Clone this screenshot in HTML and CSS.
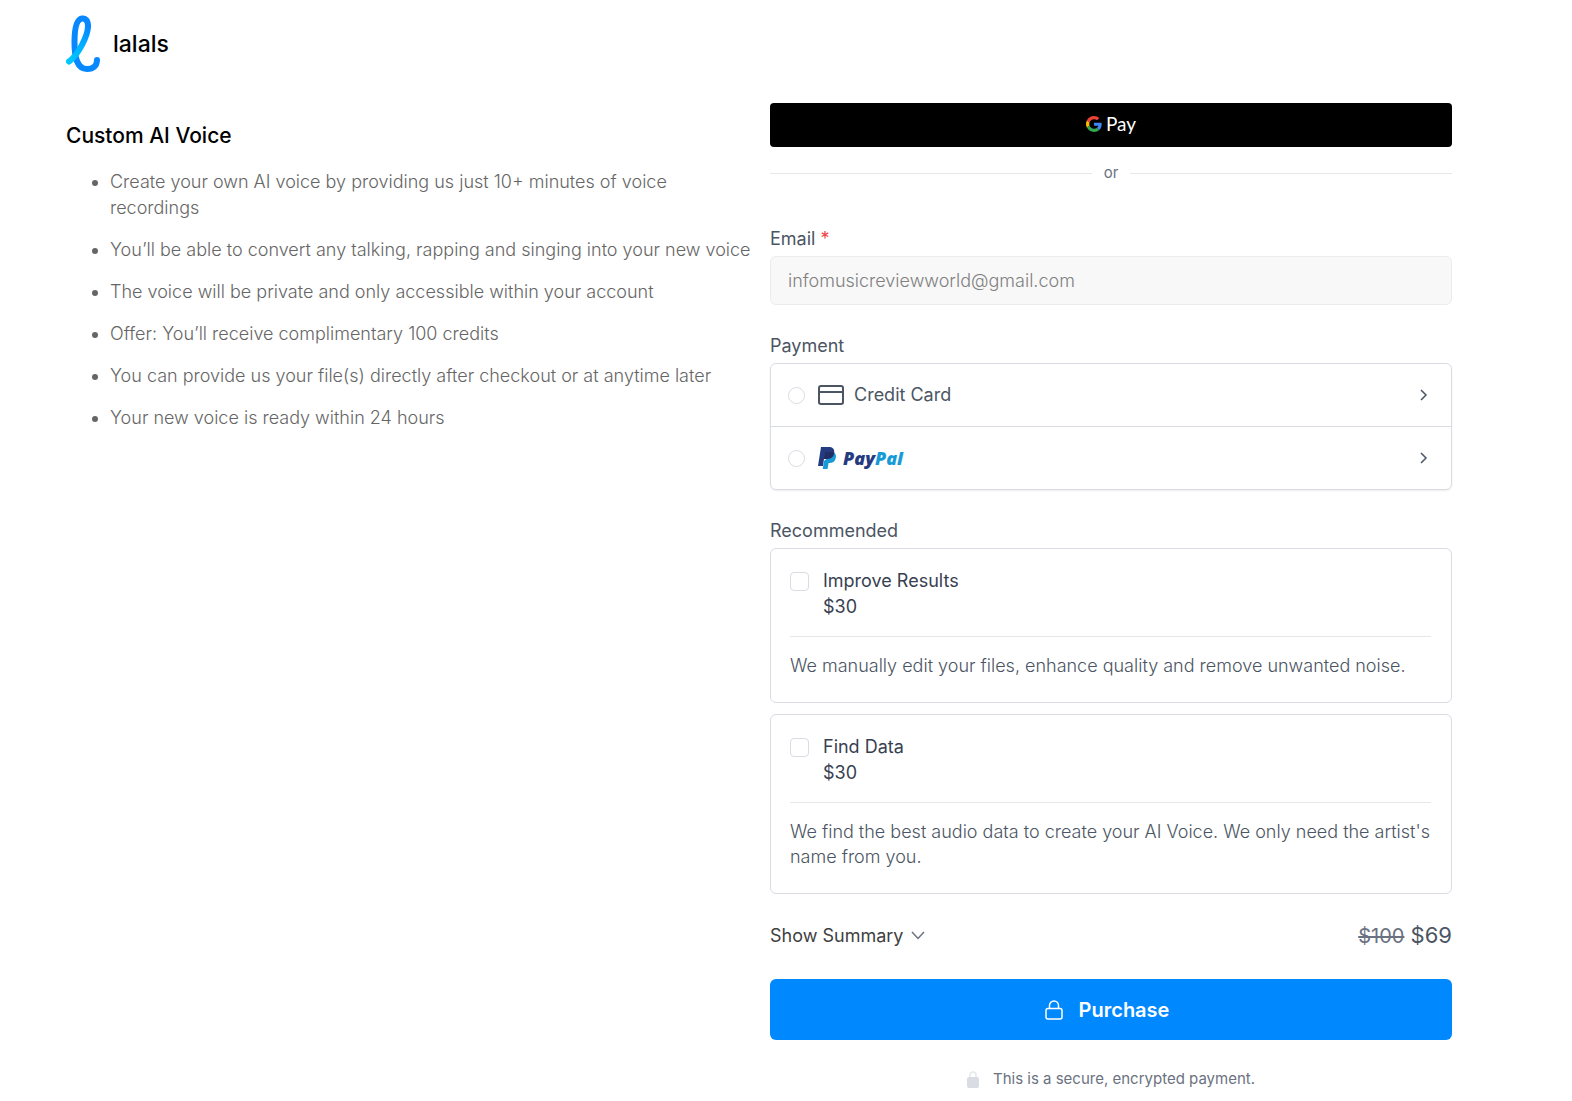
FILE: index.html
```html
<!DOCTYPE html>
<html lang="en">
<head>
<meta charset="utf-8">
<meta name="viewport" content="width=device-width, initial-scale=1">
<title>lalals – Custom AI Voice</title>
<link rel="stylesheet" href="styles.css">
</head>
<body>
<header class="site-header">
  <a class="brand" href="#">
    <svg class="brand-mark" viewBox="0 0 34 58" width="34" height="58" fill="none" stroke-linecap="round" stroke-linejoin="round" stroke-width="6" aria-hidden="true">
      <defs>
        <linearGradient id="stroke-fade" gradientUnits="userSpaceOnUse" x1="3" y1="47" x2="22" y2="12">
          <stop offset="0" stop-color="#00c8ff"/><stop offset=".45" stop-color="#00b4ff"/><stop offset="1" stop-color="#0888ff"/>
        </linearGradient>
      </defs>
      <path stroke="#0888ff" d="M22 11C22 5 19 3 16 3.500C10 4.500 8.500 15 8.500 27C8.500 43 11 54 21 54C28 54 31 50 31 45"/>
      <path stroke="url(#stroke-fade)" d="M3 46.500C12 40 22 21 22 11"/>
    </svg>
    <span>lalals</span>
  </a>
</header>
<main class="checkout">
  <section class="product">
    <h1>Custom AI Voice</h1>
    <ul>
      <li>Create your own AI voice by providing us just 10+ minutes of voice recordings</li>
      <li>You’ll be able to convert any talking, rapping and singing into your new voice</li>
      <li>The voice will be private and only accessible within your account</li>
      <li>Offer: You’ll receive complimentary 100 credits</li>
      <li>You can provide us your file(s) directly after checkout or at anytime later</li>
      <li>Your new voice is ready within 24 hours</li>
    </ul>
  </section>
  <form class="order">
    <button class="gpay" type="button" aria-label="Google Pay">
      <svg viewBox="0 0 48 48" width="16" height="16" aria-hidden="true">
        <path fill="#ea4335" d="M24 9.500c3.540 0 6.710 1.220 9.210 3.600l6.850-6.850C35.900 2.380 30.470 0 24 0 14.620 0 6.510 5.380 2.560 13.220l7.980 6.190C12.430 13.720 17.740 9.500 24 9.500z"/>
        <path fill="#4285f4" d="M46.980 24.550c0-1.570-.15-3.090-.38-4.550H24v9.020h12.940c-.58 2.960-2.260 5.480-4.780 7.180l7.730 6c4.510-4.180 7.090-10.360 7.090-17.650z"/>
        <path fill="#fbbc05" d="M10.530 28.590c-.48-1.450-.76-2.990-.76-4.590s.27-3.140.76-4.590l-7.980-6.190C.92 16.460 0 20.120 0 24c0 3.880.92 7.540 2.560 10.780l7.970-6.190z"/>
        <path fill="#34a853" d="M24 48c6.480 0 11.930-2.130 15.890-5.810l-7.730-6c-2.150 1.450-4.920 2.300-8.160 2.300-6.260 0-11.570-4.220-13.470-9.910l-7.980 6.190C6.510 42.620 14.620 48 24 48z"/>
      </svg>
      <span>Pay</span>
    </button>
    <div class="divider">or</div>

    <div class="field">
      <label for="email">Email <span class="required">*</span></label>
      <input class="text-input" id="email" type="email" value="infomusicreviewworld@gmail.com" disabled>
    </div>

    <fieldset class="field">
      <legend>Payment</legend>
      <div class="methods">
        <label class="method">
          <input type="radio" name="method" value="card">
          <svg class="card-icon" viewBox="0 0 26 20" width="26" height="20" fill="none" stroke="#4b5563" stroke-width="2" aria-hidden="true"><rect x="1" y="1" width="24" height="18" rx="2"/><path d="M1 7h24"/></svg>
          <span>Credit Card</span>
          <svg class="chevron" viewBox="0 0 8 12" width="8" height="12" fill="none" stroke="#4b5563" stroke-width="1.500" aria-hidden="true"><path d="M1 1l5 5-5 5"/></svg>
        </label>
        <label class="method">
          <input type="radio" name="method" value="paypal">
          <span class="paypal">
            <svg viewBox="0 0 18 22" width="18" height="22" aria-hidden="true">
              <path fill="#179bd7" d="M16 5.500C18 7 18.300 9 17.700 11.300C16.900 14.700 14.500 16 11.500 16H10.600L9.500 22H4.700L6 14Z"/>
              <path fill="#253b80" d="M3 0H10.500C14.500 0 16.800 2 16.200 5.800C15.500 10.300 12.500 12 8.500 12H6L4.900 19H0Z"/>
              <path fill="#222d65" d="M7.200 5.500Q7.400 5 8.100 5H13Q15 5 16.200 5.800C15.500 10.300 12.500 12 8.500 12H6.100Z"/>
            </svg>
            <span class="paypal-word">Pay<span>Pal</span></span>
          </span>
          <svg class="chevron" viewBox="0 0 8 12" width="8" height="12" fill="none" stroke="#4b5563" stroke-width="1.500" aria-hidden="true"><path d="M1 1l5 5-5 5"/></svg>
        </label>
      </div>
    </fieldset>

    <fieldset class="field">
      <legend>Recommended</legend>
      <div class="offers">
        <div class="offer">
          <label class="offer-head">
            <input type="checkbox" name="improve">
            <span>Improve Results<br>$30</span>
          </label>
          <p>We manually edit your files, enhance quality and remove unwanted noise.</p>
        </div>
        <div class="offer">
          <label class="offer-head">
            <input type="checkbox" name="find">
            <span>Find Data<br>$30</span>
          </label>
          <p>We find the best audio data to create your AI Voice. We only need the artist's name from you.</p>
        </div>
      </div>
    </fieldset>

    <div class="summary">
      <button class="summary-toggle" type="button">Show Summary
        <svg viewBox="0 0 14 9" width="14" height="9" fill="none" stroke="#6b7280" stroke-width="1.500" aria-hidden="true"><path d="M1 1l6 6.500L13 1"/></svg>
      </button>
      <div class="total"><s>$100</s> <span>$69</span></div>
    </div>
    <button class="purchase" type="submit">
      <svg viewBox="0 0 18 20" width="18" height="20" fill="none" stroke="#fff" stroke-width="1.500" aria-hidden="true"><rect x="1" y="8.500" width="16" height="10.500" rx="2"/><path d="M4.500 8.500V5.500a4.500 4.500 0 0 1 9 0v3"/></svg>
      <span>Purchase</span>
    </button>
    <p class="secure">
      <svg viewBox="0 0 12 17" width="12" height="17" aria-hidden="true"><rect y="6" width="12" height="11" rx="2" fill="#d9dce3"/><path d="M3 6V4a3 3 0 0 1 6 0v2" fill="none" stroke="#e5e7eb" stroke-width="1.500"/></svg>
      <span>This is a secure, encrypted payment.</span>
    </p>
  </form>
</main>
</body>
</html>
```
FILE: styles.css
```css
* { box-sizing: border-box; }

body {
  margin: 0;
  background: #fff;
  color: #4b5563;
  font: 400 18px/26px Inter, "Liberation Sans", sans-serif;
}

h1, p, ul, fieldset, legend { margin: 0; padding: 0; }
fieldset { border: 0; min-width: 0; }
button { border: 0; padding: 0; font: inherit; cursor: pointer; }
svg { flex: none; display: block; }

.site-header { padding: 15px 66px 0; }
.brand {
  display: inline-flex;
  align-items: center;
  gap: 13px;
  color: #000;
  font-size: 23px;
  font-weight: 500;
  text-decoration: none;
  vertical-align: top;
}

.checkout {
  display: grid;
  grid-template-columns: 1fr 1fr;
  gap: 22px;
  padding: 30px 120px 10px 66px;
}

.product { padding-top: 18px; }
.product h1 {
  color: #000;
  font-size: 21px;
  font-weight: 500;
  line-height: 30px;
}
.product ul {
  display: grid;
  gap: 16px;
  margin: 18px -8px 0 0;
  padding-left: 44px;
  color: #666;
  font-weight: 300;
}

.gpay {
  display: flex;
  align-items: center;
  justify-content: center;
  gap: 4px;
  width: 100%;
  height: 44px;
  padding-bottom: 2px;
  border-radius: 4px;
  background: #000;
  color: #fff;
  font-family: Lato, sans-serif;
  font-size: 19px;
}

.divider {
  display: flex;
  align-items: center;
  gap: 12px;
  margin-top: 14px;
  color: #6b7280;
  font-size: 15px;
  line-height: 24px;
}
.divider::before, .divider::after {
  content: "";
  flex: 1;
  height: 1px;
  background: #e5e7eb;
}

.field { margin-top: 28px; }
.divider + .field { margin-top: 41px; }
.field > label, .field > legend { display: block; margin-bottom: 4px; }
.required { color: #f04444; }
.text-input {
  display: block;
  width: 100%;
  height: 49px;
  padding: 0 17px;
  border: 1px solid #ececee;
  border-radius: 6px;
  background: #f8f8f8;
  color: #808080;
  font: inherit;
  font-weight: 300;
}

.methods {
  border: 1px solid #d9dce3;
  border-radius: 6px;
  box-shadow: 0 1px 2px rgba(0, 0, 0, .08);
}
.method {
  display: flex;
  align-items: center;
  height: 62px;
  padding: 0 23px 0 17px;
}
.method + .method { height: 63px; border-top: 1px solid #d9dce3; }
.method input, .offer input {
  appearance: none;
  flex: none;
  margin: 0;
  border: 1px solid #d9dce3;
  background: #fff;
}
.method input { width: 17px; height: 17px; margin-right: 13px; border-radius: 50%; }
.method input:checked, .offer input:checked { background: #0088ff; }
.card-icon { margin-right: 10px; }
.chevron { margin-left: auto; }
.paypal { display: flex; align-items: center; gap: 7px; }
.paypal-word {
  color: #253b80;
  font: italic 800 18px/26px "Open Sans", sans-serif;
}
.paypal-word span { color: #179bd7; }

.offers { display: grid; gap: 11px; }
.offer {
  padding: 19px 20px 24px 19px;
  border: 1px solid #d9dce3;
  border-radius: 6px;
}
.offer-head {
  display: flex;
  gap: 14px;
  padding-bottom: 16px;
  border-bottom: 1px solid #e5e7eb;
  color: #374151;
}
.offer input { width: 19px; height: 19px; margin-top: 4px; border-radius: 4px; }
.offer p { margin-top: 16px; font-weight: 300; line-height: 25px; }

.summary {
  display: flex;
  align-items: center;
  justify-content: space-between;
  margin-top: 28px;
}
.summary-toggle {
  display: flex;
  align-items: center;
  gap: 8px;
  background: none;
  color: #404040;
}
.total { font-size: 22px; }
.total s { color: #6b7280; font-size: 20px; }

.purchase {
  display: flex;
  align-items: center;
  justify-content: center;
  gap: 16px;
  width: 100%;
  height: 61px;
  margin-top: 30px;
  padding-right: 8px;
  border-radius: 6px;
  background: #0088ff;
  color: #fff;
  font-size: 20px;
  font-weight: 600;
}

.secure {
  display: flex;
  align-items: center;
  justify-content: center;
  gap: 14px;
  margin-top: 27px;
  color: #6b7280;
  font-size: 15px;
  line-height: 24px;
}

@media (max-width: 900px) {
  .checkout { grid-template-columns: 1fr; padding: 24px; }
  .site-header { padding: 16px 24px 0; }
}
```
